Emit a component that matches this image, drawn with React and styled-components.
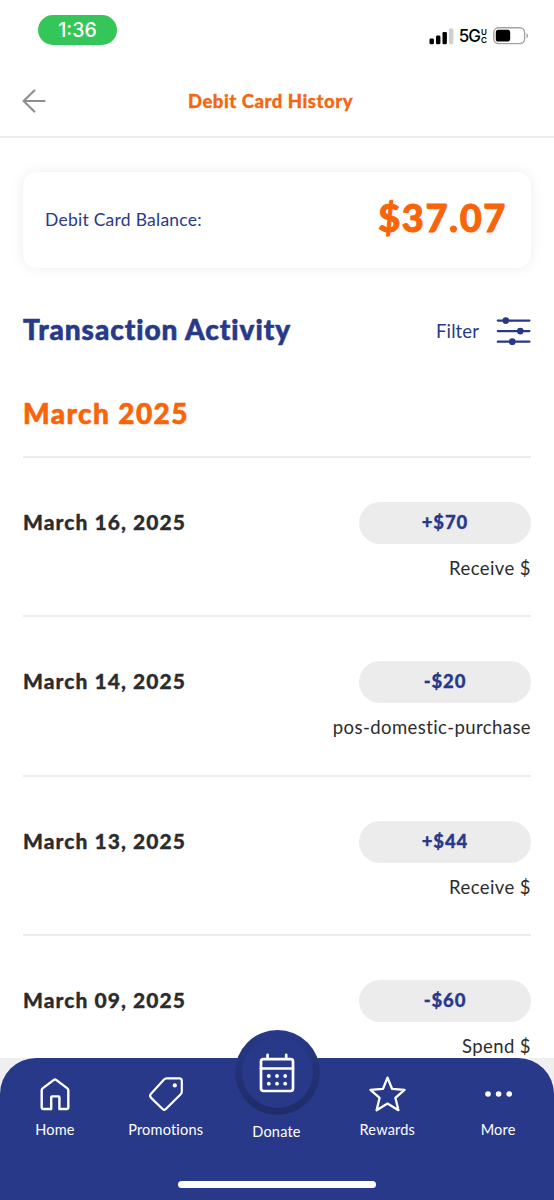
import React from 'react';
import styled, { createGlobalStyle } from 'styled-components';

const blue = '#28398a';
const orange = '#fa6408';

const GlobalStyle = createGlobalStyle`
* {
  box-sizing: border-box;
}
body {
  margin: 0;
  background-color: #fff;
  font-family: Lato, "Open Sans", sans-serif;
  -webkit-font-smoothing: antialiased;
}
h1, h2, h3, p {
  margin: 0;
}
`

const Screen = styled.div`
width: 554px;
height: 1200px;
display: flex;
flex-direction: column;
background-color: #fff;
overflow: hidden;
`

const StatusBar = styled.div`
height: 66px;
flex: none;
display: flex;
justify-content: space-between;
align-items: flex-start;
padding: 15px 25px 0 38px;
`

const Clock = styled.div`
width: 79px;
height: 30px;
border-radius: 15px;
background-color: #34c659;
color: #fff;
font-family: Inter, sans-serif;
font-weight: 500;
font-size: 19.5px;
letter-spacing: 0;
line-height: 31px;
text-align: center;
`

const StatusIcons = styled.div`
display: flex;
align-items: center;
padding-top: 10px;
`

const Network = styled.span`
margin-left: 5px;
font-family: Inter, sans-serif;
font-weight: 500;
font-size: 17px;
letter-spacing: -1px;
line-height: 22px;
color: #000;
`

const NetworkSuffix = styled.span`
display: flex;
flex-direction: column;
width: 7px;
margin: 0 5px 0 1px;
font-family: Inter, sans-serif;
font-weight: 600;
font-size: 8px;
line-height: 10px;
color: #000;
span + span {
  margin-top: -2px;
}
`

const Header = styled.header`
height: 72px;
flex: none;
display: grid;
grid-template-columns: 60px 1fr 60px;
align-items: center;
padding: 0 22px 0 22px;
border-bottom: 2px solid #ededed;
`

const BackButton = styled.button`
display: flex;
padding: 0;
border: 0;
background: none;
`

const Title = styled.h1`
padding-right: 13px;
text-align: center;
white-space: nowrap;
font-weight: 900;
font-size: 18.5px;
line-height: 24px;
letter-spacing: 0.53px;
-webkit-text-stroke: 0.3px;
color: #f4660f;
`

const Content = styled.main`
flex: 1;
min-height: 0;
overflow: hidden;
padding: 34px 23px 0;
`

const BalanceCard = styled.section`
height: 96px;
display: flex;
justify-content: space-between;
align-items: center;
padding: 0 24px 0 22px;
border-radius: 14px;
background-color: #fff;
box-shadow: 0 0 14px rgba(0, 0, 0, 0.08);
`

const BalanceLabel = styled.p`
font-size: 17.5px;
line-height: 24px;
letter-spacing: 0.25px;
color: ${blue};
`

const Balance = styled.p`
margin-top: -6px;
font-weight: 900;
font-size: 38px;
line-height: 46px;
letter-spacing: 1.6px;
-webkit-text-stroke: 0.9px;
color: ${orange};
`

const ActivityHeader = styled.div`
display: flex;
justify-content: space-between;
align-items: center;
height: 40px;
margin-top: 42px;
`

const ActivityTitle = styled.h2`
margin-top: -2px;
font-weight: 900;
font-size: 28px;
line-height: 36px;
letter-spacing: 0.95px;
-webkit-text-stroke: 0.6px;
color: ${blue};
`

const FilterButton = styled.button`
display: flex;
align-items: center;
gap: 17px;
padding: 2px 0 0;
border: 0;
background: none;
font-family: inherit;
font-size: 18.5px;
line-height: 24px;
letter-spacing: 0.1px;
color: ${blue};
`

const Month = styled.h2`
height: 106px;
padding-top: 45px;
font-weight: 900;
font-size: 28px;
line-height: 36px;
letter-spacing: 1.4px;
-webkit-text-stroke: 0.6px;
color: ${orange};
`

const Row = styled.article`
height: 159.3px;
display: flex;
justify-content: space-between;
align-items: flex-start;
padding-top: 44px;
border-top: 2px solid #ececec;
`

const RowDate = styled.h3`
margin-top: -1px;
font-weight: 900;
font-size: 21px;
line-height: 42px;
letter-spacing: 1.05px;
-webkit-text-stroke: 0.3px;
color: #2c2c2c;
`

const RowDetails = styled.div`
display: flex;
flex-direction: column;
align-items: flex-end;
`

const Amount = styled.div`
width: 172px;
height: 42px;
border-radius: 21px;
background-color: #ececec;
text-align: center;
font-weight: 900;
font-size: 18.5px;
line-height: 41px;
letter-spacing: 0.9px;
-webkit-text-stroke: 0.3px;
color: ${blue};
`

const Kind = styled.p`
margin-top: 12px;
font-size: 18.5px;
line-height: 24px;
letter-spacing: 0.42px;
color: #2c2c2c;
`

const TabBarBack = styled.div`
flex: none;
height: 142px;
background-color: #efefef;
`

const TabBar = styled.nav`
height: 142px;
display: flex;
flex-direction: column;
align-items: center;
justify-content: space-between;
padding-bottom: 12px;
border-radius: 36px 36px 0 0;
background-color: ${blue};
`

const Tabs = styled.div`
width: 100%;
display: grid;
grid-template-columns: repeat(5, 1fr);
`

const Tab = styled.a`
position: relative;
display: flex;
flex-direction: column;
align-items: center;
padding-top: 18px;
color: #fff;
`

const TabIcon = styled.span`
height: 36px;
display: flex;
align-items: center;
`

const TabLabel = styled.span`
margin-top: ${props => (props.$raised ? '10px' : '8px')};
padding-right: 1px;
font-size: 14.5px;
line-height: 20px;
letter-spacing: 0.2px;
`

// sits half above the bar
const DonateCircle = styled.span`
position: absolute;
top: -28px;
left: 50%;
margin-left: -42px;
width: 85px;
height: 85px;
display: flex;
align-items: center;
justify-content: center;
border-radius: 50%;
background: linear-gradient(to bottom, ${blue} 0%, #243379 40%, #1f2c68 100%);
`

const DonateInner = styled.span`
width: 71px;
height: 71px;
display: flex;
align-items: center;
justify-content: center;
border-radius: 50%;
background-color: ${blue};
`

const HomeIndicator = styled.div`
width: 198px;
height: 7px;
border-radius: 4px;
background-color: #fff;
`

const SignalIcon = () => (
  <svg width="25" height="17" viewBox="0 0 25 17">
    <rect x="0.5" y="10.5" width="4.4" height="5.8" rx="1.3" fill="#000" />
    <rect x="7" y="7.5" width="4.4" height="8.8" rx="1.3" fill="#000" />
    <rect x="13.5" y="4" width="4.4" height="12.3" rx="1.3" fill="#000" />
    <rect x="20" y="0.5" width="4.4" height="15.8" rx="1.3" fill="#d0d0d0" />
  </svg>
);

const BatteryIcon = () => (
  <svg width="36" height="18" viewBox="0 0 36 18">
    <rect x="0.8" y="0.8" width="30.8" height="15.8" rx="4.8" fill="none" stroke="#a3a3a3" strokeWidth="1.4" />
    <rect x="2.8" y="2.8" width="14.4" height="11.8" rx="2.6" fill="#000" />
    <path d="M33.5 6.2 C35.6 7 35.6 10.4 33.5 11.2 Z" fill="#a3a3a3" />
  </svg>
);

const ArrowIcon = () => (
  <svg width="25" height="24" viewBox="0 0 25 24" fill="none" stroke="#8f8f8f" strokeWidth="2.2" strokeLinecap="round" strokeLinejoin="round">
    <path d="M12.3 1.5 L1.6 12 L12.3 22.5 M1.6 12 H22.6" />
  </svg>
);

const FilterIcon = () => (
  <svg width="35" height="28" viewBox="0 0 35 28" stroke={blue} strokeWidth="2.3" strokeLinecap="round" fill={blue}>
    <path d="M1.8 3.6 H33.4 M1.8 14.1 H33.4 M1.8 24.7 H33.4" />
    <circle cx="9.8" cy="3.6" r="2.2" />
    <circle cx="24.3" cy="14.1" r="2.2" />
    <circle cx="16.3" cy="24.7" r="2.2" />
  </svg>
);

const HomeIcon = () => (
  <svg width="32" height="34" viewBox="0 0 32 34" fill="none" stroke="#fff" strokeWidth="2.4" strokeLinejoin="round">
    <path d="M14.9 2.9 Q16 2.1 17.1 2.9 L28.4 11.4 Q29.3 12 29.3 13.2 V30.2 Q29.3 32 27.5 32 H20.4 V20.2 Q20.4 19.4 19.6 19.4 H13 Q12.2 19.4 12.2 20.2 V32 H4.5 Q2.7 32 2.7 30.2 V13.2 Q2.7 12 3.6 11.4 Z" />
  </svg>
);

const TagIcon = () => (
  <svg width="36" height="36" viewBox="0 0 36 36" fill="none" stroke="#fff" strokeWidth="2.2" strokeLinejoin="round">
    <path d="M18.6 2.4 H31.4 Q33.8 2.4 33.8 4.8 V15.6 Q33.8 17.2 32.7 18.3 L17.6 33.2 Q16.2 34.4 14.8 33.2 L2.9 21.6 Q1.4 19.8 2.8 18 L15.8 3.8 Q17.1 2.4 18.6 2.4 Z" />
    <circle cx="26.8" cy="9.4" r="2.1" fill="#fff" stroke="none" />
  </svg>
);

const CalendarIcon = () => (
  <svg width="36" height="40" viewBox="0 0 36 40" fill="none" stroke="#fff" strokeWidth="2.7" strokeLinecap="round">
    <rect x="2" y="6.2" width="32" height="31.8" rx="2.4" />
    <path d="M2 15.5 H34" />
    <path d="M8.6 5.2 V1.8 M27.2 5.2 V1.8" />
    <g fill="#fff" stroke="none">
      <circle cx="9.8" cy="23" r="1.9" />
      <circle cx="18" cy="23" r="1.9" />
      <circle cx="26.2" cy="23" r="1.9" />
      <circle cx="9.8" cy="30.7" r="1.9" />
      <circle cx="18" cy="30.7" r="1.9" />
      <circle cx="26.2" cy="30.7" r="1.9" />
    </g>
  </svg>
);

const StarIcon = () => (
  <svg width="38" height="36" viewBox="0 0 38 36" fill="none" stroke="#fff" strokeWidth="2.3" strokeLinejoin="round">
    <path d="M18.5 1.6 L23 12.8 L35.5 13.9 L26.4 21.8 L29.4 34.2 L18.5 27.6 L7.6 34.2 L10.6 21.8 L1.5 13.9 L14 12.8 Z" />
  </svg>
);

const MoreIcon = () => (
  <svg width="28" height="8" viewBox="0 0 28 8" fill="#fff">
    <circle cx="3" cy="4" r="2.8" />
    <circle cx="13.6" cy="4" r="2.8" />
    <circle cx="24.2" cy="4" r="2.8" />
  </svg>
);

const transactions = [
  { date: 'March 16, 2025', amount: '+$70', kind: 'Receive $' },
  { date: 'March 14, 2025', amount: '-$20', kind: 'pos-domestic-purchase' },
  { date: 'March 13, 2025', amount: '+$44', kind: 'Receive $' },
  { date: 'March 09, 2025', amount: '-$60', kind: 'Spend $' }
];

const App = () => {
  return (
    <>
      <GlobalStyle />
      <Screen>
        <StatusBar>
          <Clock>1:36</Clock>
          <StatusIcons>
            <SignalIcon />
            <Network>5G</Network>
            <NetworkSuffix>
              <span>U</span>
              <span>C</span>
            </NetworkSuffix>
            <BatteryIcon />
          </StatusIcons>
        </StatusBar>
        <Header>
          <BackButton aria-label="Back"><ArrowIcon /></BackButton>
          <Title>Debit Card History</Title>
        </Header>
        <Content>
          <BalanceCard>
            <BalanceLabel>Debit Card Balance:</BalanceLabel>
            <Balance>$37.07</Balance>
          </BalanceCard>
          <ActivityHeader>
            <ActivityTitle>Transaction Activity</ActivityTitle>
            <FilterButton>
              Filter
              <FilterIcon />
            </FilterButton>
          </ActivityHeader>
          <Month>March 2025</Month>
          {transactions.map(item => (
            <Row key={item.date}>
              <RowDate>{item.date}</RowDate>
              <RowDetails>
                <Amount>{item.amount}</Amount>
                <Kind>{item.kind}</Kind>
              </RowDetails>
            </Row>
          ))}
        </Content>
        <TabBarBack>
          <TabBar>
            <Tabs>
              <Tab>
                <TabIcon><HomeIcon /></TabIcon>
                <TabLabel>Home</TabLabel>
              </Tab>
              <Tab>
                <TabIcon><TagIcon /></TabIcon>
                <TabLabel>Promotions</TabLabel>
              </Tab>
              <Tab>
                <DonateCircle>
                  <DonateInner><CalendarIcon /></DonateInner>
                </DonateCircle>
                <TabIcon />
                <TabLabel $raised>Donate</TabLabel>
              </Tab>
              <Tab>
                <TabIcon><StarIcon /></TabIcon>
                <TabLabel>Rewards</TabLabel>
              </Tab>
              <Tab>
                <TabIcon><MoreIcon /></TabIcon>
                <TabLabel>More</TabLabel>
              </Tab>
            </Tabs>
            <HomeIndicator />
          </TabBar>
        </TabBarBack>
      </Screen>
    </>
  );
};

export default App;
